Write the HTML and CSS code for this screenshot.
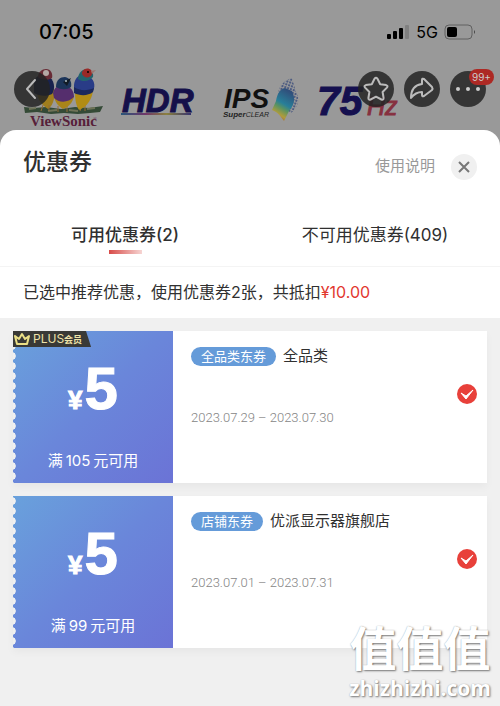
FILE: index.html
```html
<!DOCTYPE html>
<html lang="zh-CN">
<head>
<meta charset="utf-8">
<meta name="viewport" content="width=device-width, initial-scale=1">
<title>优惠券</title>
<link rel="stylesheet" href="styles.css">
</head>
<body>
<div class="screen">
  <header class="hero">
    <div class="status">
      <span class="time">07:05</span>
      <div class="status-right">
        <svg width="23" height="16" viewBox="0 0 23 16" aria-hidden="true">
          <rect x="0" y="10" width="4" height="5" rx="1"/><rect x="6" y="7" width="4" height="8" rx="1"/><rect x="12" y="4" width="4" height="11" rx="1"/><rect x="18" y="1" width="4" height="14" rx="1" fill="#808080"/>
        </svg>
        <span class="network">5G</span>
        <svg width="32" height="16" viewBox="0 0 32 16" aria-hidden="true">
          <rect x="1" y="1" width="27" height="14" rx="4" fill="none" stroke="#606060" stroke-width="1"/><rect x="3" y="3" width="10" height="10" rx="2"/><path d="M30 6q2 2 0 4z" fill="#444"/>
        </svg>
      </div>
    </div>
    <div class="logos">
      <svg width="80" height="66" viewBox="0 0 80 66" aria-label="ViewSonic">
        <path d="M0 43l10 1 12-1 15 2 14-2 14 1 14-2-3 6-10 1-12 1-14-1-13 1-14-2-12 1z" fill="#344a36"/>
        <path d="M5 45l7-1M24 47l9-1M45 46l9 1M63 45l8-1" stroke="#6e7257" stroke-width="2"/>
        <path d="M12 22c0 11 5 19 12 23 6-4 8-14 5-24z" fill="#a17e1d"/>
        <path d="M10 18c2-7 8-9 14-6 6 3 8 12 4 18-6 3-13 2-18-1z" fill="#18224e"/>
        <path d="M14 13c0-5 4-8 8-8 5 0 7 5 6 9-4 3-11 2-14-1z" fill="#682b35"/><circle cx="22" cy="9" r="3" fill="#b4a8a4"/>
        <path d="M17 47l2-6M25 47v-6M34 48v-6M43 48v-6M56 47l2-6M61 47v-6" stroke="#946d35" stroke-width="1"/>
        <path d="M30 32c1 6 4 10 9 13 6-2 10-7 11-13z" fill="#a98419"/>
        <path d="M29 29c2-7 6-8 11-7 7 0 10 5 10 11-6 6-15 6-20 1z" fill="#552e6d"/>
        <path d="M32 23c0-7 4-10 9-10 5 1 7 5 6 10-4 3-10 3-15 0z" fill="#1c355a"/><path d="M39 18l8-4-4 8z" fill="#111b25"/><circle cx="42" cy="17" r="1" fill="#aebdc1"/>
        <path d="M51 25c0 8 0 15 4 21 8-3 14-12 14-21z" fill="#b28c15"/>
        <path d="M50 21c1-9 7-12 13-9 7 2 9 9 6 15-5 4-13 4-19 1z" fill="#293c87"/>
        <path d="M50 23c6 4 13 4 20 1l-1 4c-5 4-13 4-19 1z" fill="#1b285c"/>
        <path d="M54 15c0-5 3-9 8-10 4 0 8 3 7 8-4 5-11 5-15 2z" fill="#24656e"/><path d="M58 8c3-6 11-4 10 2-1 4-8 5-10 0z" fill="#9a2a28"/><path d="M67 7l5-1-4 4z" fill="#9c7770"/><circle cx="64" cy="8" r="1"/>
        <text x="6" y="62" class="viewsonic">ViewSonic</text><text x="69" y="56" class="mark">®</text>
      </svg>
      <svg width="80" height="66" viewBox="0 0 80 66" aria-label="HDR">
        <defs><linearGradient id="line"><stop stop-color="#28567a"/><stop offset=".35" stop-color="#70366a"/><stop offset=".65" stop-color="#8a803e"/><stop offset="1" stop-color="#36336f"/></linearGradient></defs>
        <text x="2" y="48" class="hdr">HDR</text><rect x="1" y="49" width="70" height="2" fill="url(#line)"/>
      </svg>
      <svg width="84" height="66" viewBox="0 0 84 66" aria-label="IPS SuperClear">
        <defs>
          <linearGradient id="fan" x1=".1" y1="1" x2=".5" y2="0"><stop stop-color="#9b4545"/><stop offset=".25" stop-color="#b09c3c"/><stop offset=".45" stop-color="#5c9360"/><stop offset=".6" stop-color="#287f99"/><stop offset="1" stop-color="#30507c"/></linearGradient>
          <pattern id="dots" width="3" height="3" patternUnits="userSpaceOnUse" patternTransform="rotate(20)"><circle cx="1" cy="1" r="1" fill="#354879"/></pattern>
        </defs>
        <text x="8" y="44" class="ips">IPS</text><text x="7" y="53" class="super">Super<tspan class="clear">CLEAR</tspan></text>
        <path d="M62 29c1-7 6-13 14-15l4 14c5 8 1 16-5 21l-7-6z" fill="url(#dots)"/>
        <path d="M60 37c1-7 4-12 9-13l7 3c4 8 2 14-3 20l-5 10c-3-4-6-9-12-11z" fill="url(#fan)"/>
      </svg>
      <svg width="84" height="66" viewBox="0 0 84 66" aria-label="75Hz">
        <text x="1" y="51" class="seventy">75</text><text x="51" y="51" class="hertz">Hz</text>
      </svg>
    </div>
    <nav class="actions" aria-label="页面操作">
      <button class="round back" aria-label="返回"><svg width="36" height="36" viewBox="0 0 36 36"><path d="M21 9l-8 9 8 9"/></svg></button>
      <button class="round" aria-label="收藏"><svg width="36" height="36" viewBox="0 0 36 36"><path d="M16.500 7.800q1.500-2 3 0l2.700 5.400 6 .9q2.200.6.700 2.500l-4.300 4.400 1 6q0 2.200-2.200 1.500L18 25.700l-5.400 2.800q-2.200.7-2.200-1.500l1-6-4.300-4.400q-1.500-1.900.7-2.500l6-.9z"/></svg></button>
      <button class="round" aria-label="分享"><svg width="36" height="36" viewBox="0 0 36 36"><path d="M18 9q0-2 2-1l8 8q1 1.500 0 3l-8 6q-2 1-2-1v-3c-5 0-8 2-11 6 0-8 3-13 11-14z"/></svg></button>
      <button class="round" aria-label="更多"><svg width="36" height="36" viewBox="0 0 36 36"><g fill="#ccc" stroke="none"><circle cx="8" cy="18" r="2"/><circle cx="18" cy="18" r="2"/><circle cx="28" cy="18" r="2"/></g></svg><span class="badge">99+</span></button>
    </nav>
  </header>

  <main class="sheet">
    <div class="sheet-head">
      <h1>优惠券</h1>
      <a href="#help" class="help">使用说明</a>
      <button class="close" aria-label="关闭"><svg width="26" height="26" viewBox="0 0 26 26"><path d="M8 8l10 10M18 8L8 18"/></svg></button>
    </div>
    <div class="tabs" role="tablist">
      <button class="tab active" role="tab" aria-selected="true">可用优惠券(2)</button>
      <button class="tab" role="tab" aria-selected="false">不可用优惠券(409)</button>
    </div>
    <p class="summary">已选中推荐优惠，使用优惠券2张，共抵扣<span class="amount">¥10.00</span></p>
    <section class="coupons">
      <article class="coupon">
        <div class="value">
          <span class="plus"><svg width="16" height="14" viewBox="0 0 16 14" aria-hidden="true"><path d="M1 4l4 3 3-5 3 5 4-3-2 8H3z"/></svg><span>PLUS<b>会员</b></span></span>
          <p class="price"><span class="yen">¥</span>5</p>
          <p class="limit">满<span class="number">105</span>元可用</p>
        </div>
        <div class="detail">
          <h2><span class="tag">全品类东券</span>全品类</h2>
          <p class="date">2023.07.29 – 2023.07.30</p>
        </div>
        <label class="pick"><input type="checkbox" checked aria-label="使用全品类优惠券"><svg width="20" height="20" viewBox="0 0 20 20" aria-hidden="true"><path d="M4 9l5 3 7-6-7 9z"/></svg></label>
      </article>
      <article class="coupon">
        <div class="value">
          <p class="price"><span class="yen">¥</span>5</p>
          <p class="limit">满<span class="number">99</span>元可用</p>
        </div>
        <div class="detail">
          <h2><span class="tag">店铺东券</span>优派显示器旗舰店</h2>
          <p class="date">2023.07.01 – 2023.07.31</p>
        </div>
        <label class="pick"><input type="checkbox" checked aria-label="使用优派显示器旗舰店优惠券"><svg width="20" height="20" viewBox="0 0 20 20" aria-hidden="true"><path d="M4 9l5 3 7-6-7 9z"/></svg></label>
      </article>
    </section>
  </main>
  <div class="watermark"><span class="watermark-name">值值值</span><span class="watermark-site">zhizhizhi.com</span></div>
</div>
</body>
</html>
```

FILE: styles.css
```css
* { box-sizing: border-box; }
body {
  margin: 0;
  background: #999;
  color: #303030;
  font-family: Inter, "Noto Sans CJK SC", sans-serif;
}
h1, h2, p { margin: 0; }
button { border: 0; padding: 0; font: inherit; color: inherit; background: none; cursor: pointer; }
svg { display: block; flex: none; }

.screen { position: relative; display: flex; flex-direction: column; min-height: 100vh; }
.hero { position: relative; overflow: hidden; }
.status {
  display: flex;
  align-items: center;
  justify-content: space-between;
  height: 64px;
  padding: 0 24px 0 39px;
  color: #000;
}
.time { font-size: 20px; font-weight: 500; }
.status-right { display: flex; align-items: center; gap: 6px; }
.network { font-size: 16px; }
.logos { display: flex; gap: 16px; height: 66px; padding-left: 24px; }
.viewsonic { font: bold 15px "Liberation Serif", serif; fill: #572039; }
.mark { font: 5px "Liberation Serif", serif; fill: #572039; }
.hdr { font: italic bold 33px "Liberation Sans", sans-serif; fill: #15104a; stroke: #15104a; stroke-width: 1px; }
.ips { font: italic bold 28px "Liberation Sans", sans-serif; fill: #111; }
.super { font: italic bold 8px "Liberation Sans", sans-serif; fill: #222; }
.clear { font-size: 7px; font-weight: normal; }
.seventy { font: italic bold 41px "Liberation Sans", sans-serif; fill: #15104f; stroke: #15104f; stroke-width: 1px; }
.hertz { font: italic 25px "Liberation Sans", sans-serif; fill: #86303f; stroke: #86303f; stroke-width: 1px; }

.actions { position: absolute; top: 71px; left: 14px; right: 14px; display: flex; gap: 10px; }
.round { position: relative; width: 36px; height: 36px; border-radius: 50%; background: rgba(35, 35, 35, .85); }
.round svg { fill: none; stroke: #bbb; stroke-width: 2; stroke-linejoin: round; stroke-linecap: round; }
.back { margin-right: auto; }
.badge {
  position: absolute;
  top: -2px;
  right: -8px;
  padding: 0 3px;
  border-radius: 8px;
  background: #ad2924;
  color: #ccc;
  font-size: 10px;
  line-height: 16px;
}

.sheet { flex: 1; display: flex; flex-direction: column; border-radius: 16px 16px 0 0; background: #fff; overflow: hidden; }
.sheet-head { display: flex; align-items: flex-start; padding: 18px 23px 0; }
h1 { flex: 1; font-size: 23px; line-height: 28px; font-weight: 500; }
.help { color: #999; font-size: 15px; line-height: 36px; text-decoration: none; }
.close { margin: 6px 0 4px 16px; border-radius: 50%; background: #f0f0f0; }
.close svg { stroke: #777; stroke-width: 2; }
.tabs { display: grid; grid-template-columns: 1fr 1fr; padding-top: 39px; border-bottom: 1px solid #f4f4f4; }
.tab { display: flex; flex-direction: column; align-items: center; padding-bottom: 12px; font-size: 17px; line-height: 24px; }
.tab::after { content: ""; width: 33px; height: 4px; margin-top: 3px; }
.active { font-weight: 500; }
.active::after { background: linear-gradient(90deg, #d84b48, #f6d5d3); }
.summary { padding: 13px 23px; font-size: 16px; line-height: 25px; }
.amount { color: #e2382f; }

.coupons { flex: 1; display: flex; flex-direction: column; gap: 13px; padding: 13px; background: #f0f0f0; }
.coupon { display: flex; min-height: 152px; padding-right: 10px; background: #fff; box-shadow: 0 4px 8px rgba(0, 0, 0, .04); }
.value {
  position: relative;
  width: 160px;
  padding-top: 28px;
  background:
    radial-gradient(ellipse 3px 4px at 0 5px, #f0f0f0 80%, transparent) 0 0 / 4px 10px repeat-y,
    linear-gradient(135deg, #69a1dc, #6a86da 50%, #6b73d6);
  color: #fff;
  text-align: center;
}
.plus {
  position: absolute;
  top: 0;
  left: 0;
  display: flex;
  align-items: center;
  gap: 3px;
  height: 16px;
  padding: 0 9px 0 1px;
  background: #393936;
  clip-path: polygon(0 0, 73px 0, 100% 100%, 0 100%);
  color: #eee2a8;
  font-size: 12px;
  line-height: 16px;
}
.plus svg { fill: none; stroke: #eadf86; stroke-width: 2; stroke-linejoin: round; }
.plus b { font-size: 9px; }
.price { font: bold 60px/60px "Liberation Sans", sans-serif; -webkit-text-stroke: 1px #fff; }
.yen { margin-right: 2px; font-size: 26px; }
.limit { margin-top: 19px; font-size: 15px; line-height: 24px; }
.number { margin: 0 3px; }
.detail { flex: 1; padding: 14px 0 0 18px; }
h2 { display: flex; align-items: center; gap: 7px; font-size: 15px; line-height: 22px; font-weight: 400; }
.tag { padding: 0 10px; border-radius: 10px; background: #659bd9; color: #fff; font-size: 13px; line-height: 19px; }
.date { margin-top: 40px; color: #858585; font: 300 13px/22px Roboto, sans-serif; }
.pick { display: grid; align-self: center; margin-top: -26px; cursor: pointer; }
.pick input, .pick svg { grid-area: 1 / 1; }
.pick input { width: 20px; height: 20px; margin: 0; border: 1px solid #bbb; border-radius: 50%; appearance: none; }
.pick input:checked { border: 0; background: #e8403a; }
.pick svg { fill: #fff; stroke: #fff; stroke-width: 1; stroke-linejoin: round; pointer-events: none; }

.watermark {
  position: absolute;
  right: 9px;
  bottom: 5px;
  display: flex;
  flex-direction: column;
  align-items: center;
  color: #fff;
  font-weight: 700;
  text-shadow: 1px 1px 2px #777, 0 0 1px #aaa;
  pointer-events: none;
}
.watermark-name { font-size: 47px; line-height: 52px; }
.watermark-site { font: bold 21px/26px "Open Sans", sans-serif; }
```
